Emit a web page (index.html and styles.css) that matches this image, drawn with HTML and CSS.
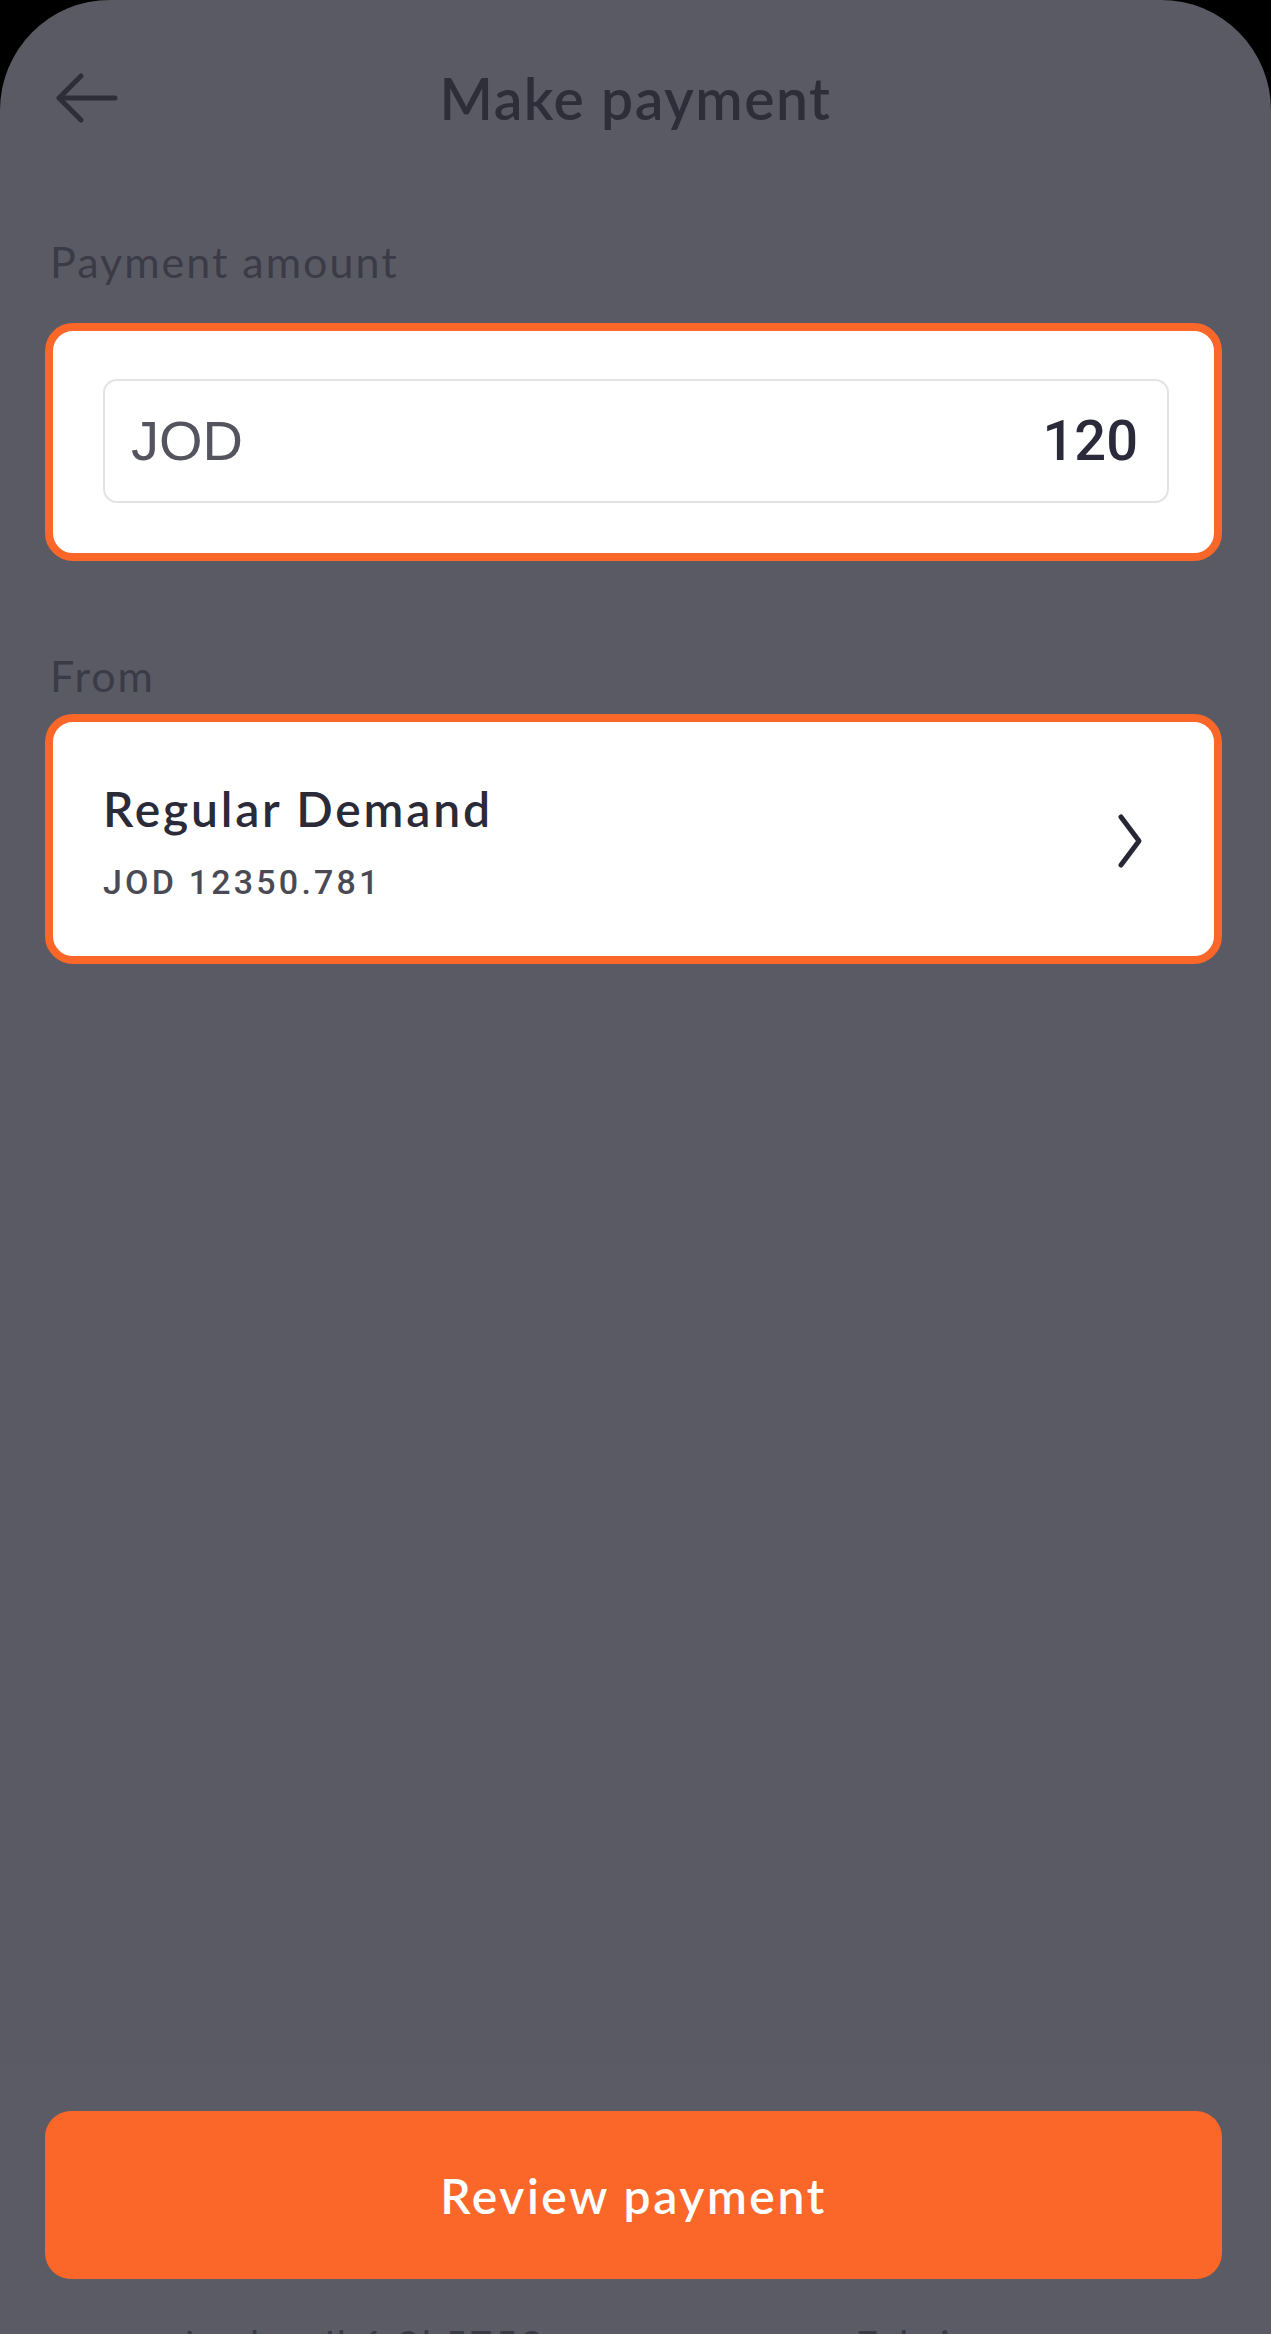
FILE: index.html
```html
<!DOCTYPE html>
<html lang="en">
	<head>
		<meta charset="UTF-8" />
		<meta name="viewport" content="width=device-width, initial-scale=1.0" />
		<title>Make payment</title>
		<link rel="stylesheet" href="styles.css">
	</head>
	<body>
		<div class="screen">
			<header class="topbar">
				<button class="back" type="button" aria-label="Back">
					<svg width="62" height="50" viewBox="0 0 62 50">
						<path d="M25 3 L3 25 L25 47 M3 25 H59" fill="none" stroke="#2e2e3b" stroke-width="5" stroke-linecap="round" stroke-linejoin="round" />
					</svg>
				</button>
				<h1 class="title">Make payment</h1>
				<span></span>
			</header>

			<main class="content">
				<p class="label label-amount">Payment amount</p>
				<div class="card amount-card">
					<div class="amount-field">
						<span class="currency">JOD</span>
						<span class="amount">120</span>
					</div>
				</div>

				<p class="label label-from">From</p>
				<div class="card account-card">
					<div class="account-info">
						<span class="account-name">Regular Demand</span>
						<span class="account-balance">JOD 12350.781</span>
					</div>
					<svg class="chevron" width="26" height="56" viewBox="0 0 26 56">
						<path d="M4 4 L22 28 L4 52" fill="none" stroke="#262636" stroke-width="5" stroke-linecap="round" stroke-linejoin="round" />
					</svg>
				</div>
			</main>

			<footer class="footer">
				<button class="review" type="button">Review payment</button>
				<div class="peek">
					<span class="peek-left">Jordan Jk6 9k5753</span>
					<span class="peek-right">Fabrics</span>
				</div>
			</footer>
		</div>
	</body>
</html>
```

FILE: styles.css
```css
html,
body {
	margin: 0;
	background: #000;
}

.screen {
	/* phone screen with the dimmed backdrop over it */
	height: 2334px;
	overflow: hidden;
	display: flex;
	flex-direction: column;
	background: #5a5a64;
	border-radius: 110px 110px 0 0;
	font-family: Lato, "Liberation Sans", sans-serif;
}

.topbar {
	height: 196px;
	display: grid;
	grid-template-columns: 1fr auto 1fr;
	align-items: center;
	padding: 0 56px;
}

.back {
	justify-self: start;
	display: flex;
	padding: 0;
	border: 0;
	background: none;
}

.title {
	margin: 0;
	font-size: 57px;
	font-weight: 600;
	letter-spacing: 1.5px;
	color: #2e2e3b;
}

.content {
	flex: 1;
	padding: 0 49px 0 45px;
}

.label {
	margin: 0;
	padding-left: 5px;
	font-size: 43px;
	line-height: 1.2;
	letter-spacing: 2px;
	color: #3b3b47;
}

.label-amount {
	margin-top: 40px;
	margin-bottom: 35px;
}

.label-from {
	margin-top: 89px;
	margin-bottom: 13px;
}

.card {
	background: #fff;
	border: 8px solid #fa6729;
	border-radius: 28px;
}

.amount-card {
	padding: 48px 45px 50px 50px;
}

.amount-field {
	height: 120px;
	display: flex;
	align-items: center;
	justify-content: space-between;
	padding: 0 29px 0 26px;
	border: 2px solid #e3e3e5;
	border-radius: 14px;
	font-family: "Liberation Sans", Arial, sans-serif;
	font-size: 56px;
	line-height: 1;
}

.currency {
	color: #54545e;
}

.amount {
	font-family: Roboto, "Liberation Sans", sans-serif;
	font-weight: 500;
	color: #2a2a3a;
}

.account-card {
	display: flex;
	align-items: center;
	justify-content: space-between;
	padding: 58px 71px 53px 50px;
}

.account-info {
	display: flex;
	flex-direction: column;
}

.account-name {
	font-size: 48px;
	font-weight: 600;
	line-height: 1.2;
	letter-spacing: 2.8px;
	color: #2a2a38;
}

.account-balance {
	margin-top: 24px;
	font-family: Roboto, "Liberation Sans", sans-serif;
	font-size: 34px;
	font-weight: 500;
	line-height: 1.2;
	letter-spacing: 3.2px;
	color: #4a4a55;
}

.footer {
	height: 271px;
	padding: 48px 49px 0 45px;
	background: #5b5b65;
	box-sizing: border-box;
}

.review {
	display: block;
	width: 100%;
	height: 168px;
	border: 0;
	border-radius: 26px;
	background: #fa6729;
	color: #fff;
	font-family: Lato, "Liberation Sans", sans-serif;
	font-size: 48px;
	font-weight: 600;
	letter-spacing: 2.6px;
}

.peek {
	display: flex;
	margin-top: 42px;
	padding-left: 133px;
	font-family: Lato, "Liberation Sans", sans-serif;
	font-size: 40px;
	line-height: 1.2;
	letter-spacing: 2px;
	color: #3a3a45;
}

.peek-right {
	margin-left: auto;
	margin-right: 230px;
}
```
